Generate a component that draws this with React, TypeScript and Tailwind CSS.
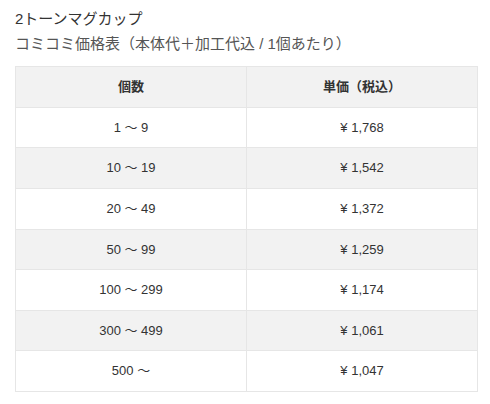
import React from "react";

const rows: [string, string][] = [
  ["1 〜 9", "¥ 1,768"],
  ["10 〜 19", "¥ 1,542"],
  ["20 〜 49", "¥ 1,372"],
  ["50 〜 99", "¥ 1,259"],
  ["100 〜 299", "¥ 1,174"],
  ["300 〜 499", "¥ 1,061"],
  ["500 〜", "¥ 1,047"],
];

export default function App() {
  return (
    <div
      className="w-[490px] h-[404px] bg-white px-[15px] pt-[6px]"
      style={{ fontFamily: '"Liberation Sans", Arial, "Noto Sans CJK JP", sans-serif' }}
    >
      <div className="text-[15px] leading-[25px] text-[#333]">2トーンマグカップ</div>
      <div className="text-[15px] leading-[25px] text-[#555]">
        コミコミ価格表（本体代＋加工代込 / 1個あたり）
      </div>
      <table className="mt-[10px] w-[463px] border-collapse table-fixed text-[13px] text-[#333]">
        <thead>
          <tr className="h-[40.625px] bg-[#f2f2f2]">
            <th className="border border-[#e6e6e6] font-bold text-center align-middle">個数</th>
            <th className="border border-[#e6e6e6] font-bold text-center align-middle">単価（税込）</th>
          </tr>
        </thead>
        <tbody>
          {rows.map(([q, p], i) => (
            <tr
              key={q}
              className={`h-[40.625px] ${i % 2 === 1 ? "bg-[#f2f2f2]" : "bg-white"}`}
            >
              <td className="border border-[#e6e6e6] text-center align-middle">{q}</td>
              <td className="border border-[#e6e6e6] text-center align-middle">{p}</td>
            </tr>
          ))}
        </tbody>
      </table>
    </div>
  );
}
